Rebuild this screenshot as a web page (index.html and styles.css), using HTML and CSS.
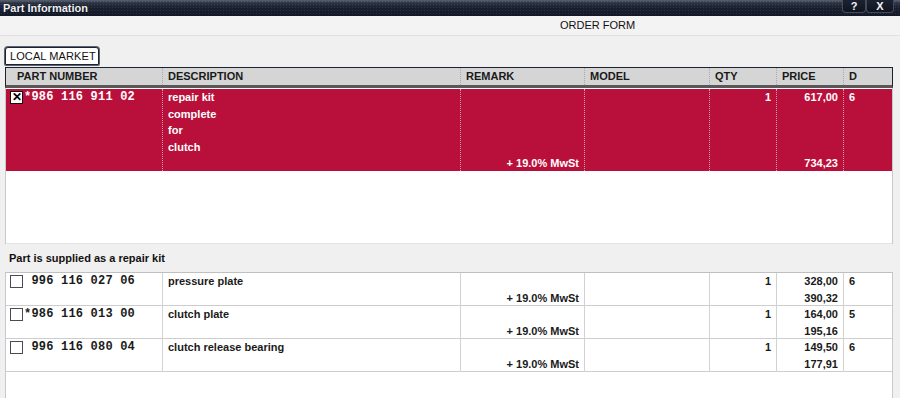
FILE: index.html
```html
<!DOCTYPE html>
<html lang="en">
<head>
  <meta charset="UTF-8">
  <title>Part Information</title>
  <link rel="stylesheet" href="styles.css">
</head>
<body>
  <div class="titlebar">
    <span class="title">Part Information</span>
    <div class="win-buttons">
      <button class="win-btn">?</button>
      <button class="win-btn close">X</button>
    </div>
  </div>

  <div class="form-title">ORDER FORM</div>

  <div class="tabs">
    <div class="tab">LOCAL MARKET</div>
  </div>

  <div class="grid-frame">
    <div class="row head">
      <div class="cell first">PART NUMBER</div>
      <div class="cell">DESCRIPTION</div>
      <div class="cell">REMARK</div>
      <div class="cell">MODEL</div>
      <div class="cell">QTY</div>
      <div class="cell">PRICE</div>
      <div class="cell">D</div>
    </div>

    <div class="row selected">
      <div class="cell part"><span class="check checked">✕</span><span class="partno">*986 116 911 02</span></div>
      <div class="cell desc">repair kit<br>complete<br>for<br>clutch</div>
      <div class="cell remark"><span class="bottom">+ 19.0% MwSt</span></div>
      <div class="cell"></div>
      <div class="cell num">1</div>
      <div class="cell num price"><span>617,00</span><span>734,23</span></div>
      <div class="cell">6</div>
    </div>
    <div class="main-filler"></div>
  </div>

  <div class="section-label">Part is supplied as a repair kit</div>

  <div class="grid-frame sub">
    <div class="row">
      <div class="cell part"><span class="check"></span><span class="partno"> 996 116 027 06</span></div>
      <div class="cell desc">pressure plate</div>
      <div class="cell remark"><span class="bottom">+ 19.0% MwSt</span></div>
      <div class="cell"></div>
      <div class="cell num">1</div>
      <div class="cell num price"><span>328,00</span><span>390,32</span></div>
      <div class="cell">6</div>
    </div>
    <div class="row">
      <div class="cell part"><span class="check"></span><span class="partno">*986 116 013 00</span></div>
      <div class="cell desc">clutch plate</div>
      <div class="cell remark"><span class="bottom">+ 19.0% MwSt</span></div>
      <div class="cell"></div>
      <div class="cell num">1</div>
      <div class="cell num price"><span>164,00</span><span>195,16</span></div>
      <div class="cell">5</div>
    </div>
    <div class="row">
      <div class="cell part"><span class="check"></span><span class="partno"> 996 116 080 04</span></div>
      <div class="cell desc">clutch release bearing</div>
      <div class="cell remark"><span class="bottom">+ 19.0% MwSt</span></div>
      <div class="cell"></div>
      <div class="cell num">1</div>
      <div class="cell num price"><span>149,50</span><span>177,91</span></div>
      <div class="cell">6</div>
    </div>
    <div class="filler"></div>
  </div>
</body>
</html>
```

FILE: styles.css
```css
* {
  margin: 0;
  padding: 0;
  box-sizing: border-box;
}
html, body {
  height: 100%;
  overflow: hidden;
}
body {
  background: #f0f0f0;
  font-family: 'Liberation Sans', Arial, sans-serif;
  font-size: 11px;
  color: #1a1a1a;
  display: flex;
  flex-direction: column;
}

/* Window title bar */
.titlebar {
  height: 16px;
  flex: none;
  display: flex;
  align-items: center;
  justify-content: space-between;
  padding-left: 3px;
  background:
    radial-gradient(circle, rgba(255, 255, 255, 0.09) 0.7px, transparent 0.9px) 0 0 / 3px 3px,
    linear-gradient(#5a6272 0, #2c3343 3px, #1a2030 8px, #131827 100%);
}
.title {
  color: #eef0f6;
  font-weight: bold;
  font-size: 11px;
  text-shadow: 0 0 1px #000;
}
.win-buttons {
  display: flex;
  align-self: flex-start;
  margin-right: 6px;
}
.win-btn {
  width: 24px;
  height: 13px;
  border: 1px solid #434a5a;
  border-top: none;
  border-radius: 0 0 4px 4px;
  background: linear-gradient(#1c2232, #10141f);
  color: #f4f4f8;
  font-family: 'Liberation Sans', Arial, sans-serif;
  font-weight: bold;
  font-size: 11px;
  line-height: 11px;
}
.win-btn.close {
  width: 28px;
}

/* Form heading */
.form-title {
  flex: none;
  height: 20px;
  line-height: 19px;
  padding-left: 560px;
  background: #f3f3f3;
  border-bottom: 1px solid #e0e0e0;
  font-size: 11px;
  color: #111;
}

.tabs {
  flex: none;
  padding: 11px 0 2px 5px;
}
.tab {
  display: inline-block;
  width: 94px;
  height: 18px;
  line-height: 16px;
  padding-left: 4px;
  white-space: nowrap;
  background: #fff;
  border: 1px solid #1d2230;
  border-radius: 3px 3px 1px 1px;
  box-shadow: 0 0 0 1px #5c6270;
  font-size: 11px;
  letter-spacing: 0.1px;
  color: #111;
}

/* Data grid */
.grid-frame {
  flex: none;
  width: 888px;
  margin-left: 5px;
  background: #fff;
  border-left: 1px solid #c8c8c8;
  border-right: 1px solid #c8c8c8;
  display: flex;
  flex-direction: column;
}
.row {
  display: grid;
  grid-template-columns: 157px 298px 124px 125px 67px 67px 1fr;
  line-height: 16.5px;
  font-weight: bold;
}
.cell {
  padding: 0 5px;
  border-right: 1px solid #cfcfcf;
  white-space: nowrap;
}
.cell:last-child {
  border-right: none;
}

.row.head {
  background: #d5d5d5;
  margin: 0 -1px;
  border: 1px solid #1d2230;
  border-bottom: 3px solid #585858;
  height: 21px;
  line-height: 16px;
  color: #1a1a1a;
  margin-bottom: 1px;
}
.row.head .cell {
  border-right: 1px dotted #a8a8b4;
}
.row.head .cell:last-child {
  border-right: none;
}
.row.head .cell.first {
  padding-left: 11px;
}

.row.selected {
  background: #b8103a;
  color: #fff;
  min-height: 82px;
}
.row.selected .cell {
  border-right: 1px dotted #d8a0ae;
}
.row.selected .cell:last-child {
  border-right: none;
}

.cell.part {
  padding-left: 4px;
  display: flex;
  align-items: flex-start;
}
.partno {
  font-family: 'Liberation Mono', 'Courier New', monospace;
  font-weight: bold;
  font-size: 12px;
  letter-spacing: 0.2px;
  white-space: pre;
  margin-left: 1px;
}
.check {
  width: 13px;
  height: 13px;
  margin-top: 2px;
  flex: none;
  background: #fff;
  border: 1px solid #4a4a56;
  display: flex;
  align-items: center;
  justify-content: center;
}
.check.checked {
  border-color: #111;
  color: #000;
  font-size: 12px;
  font-weight: bold;
  line-height: 11px;
}

.cell.remark,
.cell.price {
  display: flex;
  flex-direction: column;
  justify-content: space-between;
  align-items: flex-end;
}
.cell.remark .bottom {
  margin-top: auto;
}
.cell.num {
  text-align: right;
}

.filler {
  flex: 1;
}
.main-filler {
  flex: none;
  height: 73px;
  border-bottom: 1px solid #e4e4e4;
}

.section-label {
  flex: none;
  height: 28px;
  line-height: 28px;
  padding-left: 9px;
  font-weight: bold;
  font-size: 11px;
  color: #111;
}

.grid-frame.sub {
  flex: 1;
  border-top: 1px solid #c0c0c0;
}
.grid-frame.sub .row {
  height: 33px;
  border-bottom: 1px solid #cdcdcd;
}
.grid-frame.sub .row .cell {
  border-right-color: #d2d2d2;
}
```
